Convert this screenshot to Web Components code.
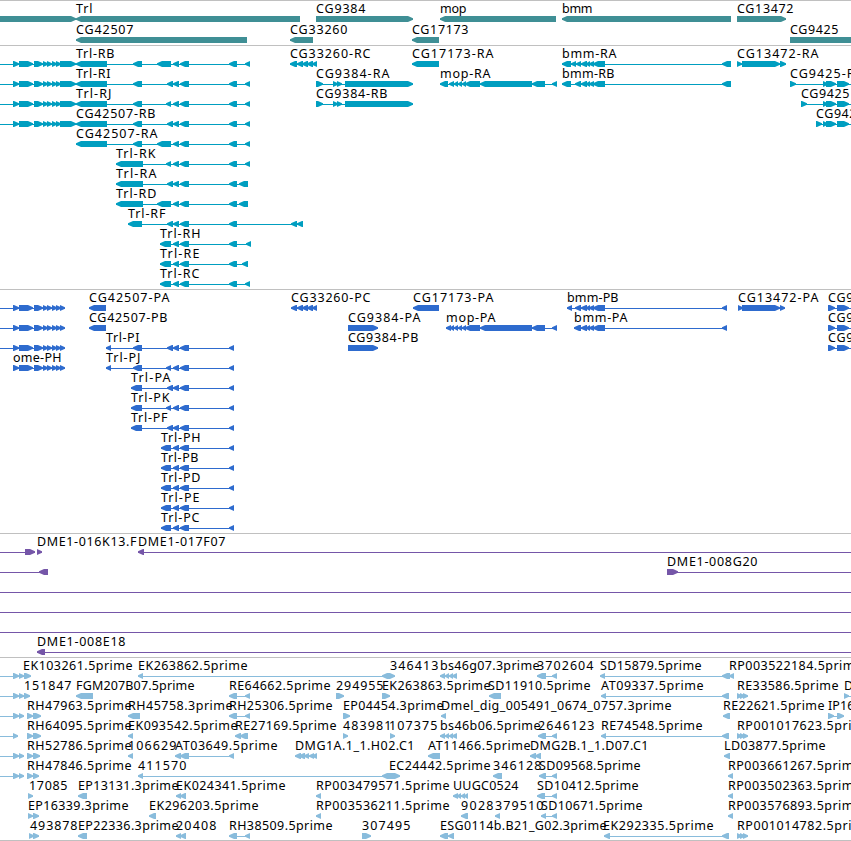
<!DOCTYPE html>
<html lang="en">
<head>
<meta charset="utf-8">
<title>Genome browser</title>
<style>
    body { margin: 0; background: #fff; overflow: hidden; font-family: "Noto Sans", "DejaVu Sans", sans-serif; font-size: 12.5px; color: #000; }
</style>
</head>
<body>
<genome-browser></genome-browser>
<script>
// Exon shapes: "<a-b" points left, ">a-b" points right, "=a-b" is a plain box, "~a-b" only extends the intron line.
const OME = '~0-13 >13-19 >19-33 >34-43 >43-48 >47-52 >52-57 >56-61 >60-76';
const OME_P = '>13-19 >19-33 >34-43 >43-48 >47-52 >52-57 >56-61 >60-65';
const E1 = '<167-173 <173-179 <180-189';
const E2 = '<166-171 <173-179 <180-189';
const E3 = '<157-171 <173-179 <180-189';
const E4 = '<173-179 <180-189';
const BMM = '<581-587 <586-590 <589-594 <593-605';
const MOP = '<454-458 <458-462 <462-466 <465-480 <480-532 <532-545 <552-557';
const TRI = '>737-742 >740-745 >743-748';

// Each feature is [label, label start, label end, exons].
const TRACKS = [
    { color: '#3f8f95', rowHeight: 21, pad: 2, rows: [
        [['', 0, 0, '>-9-76'], ['Trl', 76, 92, '<76-300'], ['CG9384', 316, 365, '>316-413'], ['mop', 440, 466, '<440-556'], ['bmm', 562, 592, '<562-731'], ['CG13472', 737, 793, '>737-786']],
        [['CG42507', 76, 133, '<76-247'], ['CG33260', 290, 347, '<290-313'], ['CG17173', 412, 468, '<412-439'], ['CG9425', 790, 838, '=790-860']]
    ] },
    { color: '#009ec0', rows: [
        [['', 0, 0, OME], ['Trl-RB', 76, 114, `<76-107 <133-142 ${E3} <229-237 <245-250`], ['CG33260-RC', 290, 370, '<290-297 <297-303 <302-308 <307-313 <312-317'], ['CG17173-RA', 412, 493, '<412-439'], ['bmm-RA', 562, 616, `<562-571 <571-576 <576-581 ${BMM} <722-731`], ['CG13472-RA', 737, 818, '>737-742 =742-774 >774-780 >780-786']],
        [['', 0, 0, OME], ['Trl-RI', 76, 110, `<76-107 <133-142 ${E1} <229-237 <245-250`], ['CG9384-RA', 316, 389, '>316-323 >333-338 >337-342 >345-413'], ['mop-RA', 440, 490, `<440-448 <449-454 ${MOP}`], ['bmm-RB', 562, 614, `<562-571 <575-581 ${BMM} <722-731`], ['CG9425-R', 790, 854, '>790-796 >823-828 >826-836 >837-849 ~849-851']],
        [['', 0, 0, OME], ['Trl-RJ', 76, 111, `<76-107 <133-142 ${E2} <229-237 <245-250`], ['CG9384-RB', 316, 387, '>316-323 >333-338 >337-342 >345-413'], ['CG9425', 801, 849, '>801-807 >823-828 >826-836 >837-849 ~849-851']],
        [['', 0, 0, OME], ['CG42507-RB', 76, 155, `<76-107 <133-142 ${E1} <229-237 <245-250`], ['CG942', 816, 856, '>816-822 >823-828 >826-836 >837-849 ~849-851']],
        [['CG42507-RA', 76, 157, `<76-107 <133-142 ${E3} <229-237 <245-250`]],
        [['Trl-RK', 116, 155, `<116-143 ${E2} <229-237 <245-250`]],
        [['Trl-RA', 116, 156, `<116-143 ${E1} <229-237 <239-248`]],
        [['Trl-RD', 116, 156, `<116-143 ${E3} <229-237 <239-248`]],
        [['Trl-RF', 128, 165, `<128-142 ${E1} <229-237 <291-297 <297-303`]],
        [['Trl-RH', 160, 200, `<160-171 ${E4} <229-237 <246-251`]],
        [['Trl-RE', 160, 199, `<160-171 ${E4} <229-237 <242-248`]],
        [['Trl-RC', 160, 199, `<160-171 ${E4} <229-237 <245-250`]]
    ] },
    { color: '#2e6bce', rows: [
        [['', 0, 0, `~0-13 ${OME_P}`], ['CG42507-PA', 89, 169, '<89-106'], ['CG33260-PC', 291, 370, '<291-297 <297-303 <302-308 <307-313 <312-317'], ['CG17173-PA', 413, 493, '<413-439'], ['bmm-PB', 567, 618, `<567-572 <575-581 ${BMM} <722-727`], ['CG13472-PA', 738, 818, '>738-743 =742-774 >774-780 >780-785'], ['CG9', 828, 853, '>828-835 >837-849 ~849-851']],
        [['', 0, 0, `~0-13 ${OME_P}`], ['CG42507-PB', 89, 167, '<89-106'], ['CG9384-PA', 348, 420, '>348-378'], ['mop-PA', 446, 495, `<446-451 <450-454 ${MOP}`], ['bmm-PA', 574, 627, `<574-581 ${BMM} <722-727`], ['CG9', 828, 853, '>828-835 >837-849 ~849-851']],
        [['', 0, 0, `~0-13 ${OME_P}`], ['Trl-PI', 106, 139, `<106-111 <133-142 ${E1} <229-234`], ['CG9384-PB', 348, 418, '>348-378'], ['CG9', 828, 853, '>828-835 >837-849 ~849-851']],
        [['ome-PH', 13, 61, OME_P], ['Trl-PJ', 106, 140, `<106-111 <133-142 ${E2} <229-234`]],
        [['Trl-PA', 131, 170, `<131-142 ${E1} <229-234`]],
        [['Trl-PK', 131, 169, `<131-142 ${E2} <229-234`]],
        [['Trl-PF', 131, 167, `<131-142 ${E1} <229-234`]],
        [['Trl-PH', 161, 200, `<161-171 ${E4} <229-234`]],
        [['Trl-PB', 161, 198, `<161-171 ${E4} <229-234`]],
        [['Trl-PD', 161, 200, `<161-171 ${E4} <229-234`]],
        [['Trl-PE', 161, 199, `<161-171 ${E4} <229-234`]],
        [['Trl-PC', 161, 199, `<161-171 ${E4} <229-234`]]
    ] },
    { color: '#7556a8', rows: [
        [['', 0, 0, '~0-25 >25-35'], ['DME1-016K13.F', 37, 136, '>37-42'], ['DME1-017F07', 138, 225, '<138-144 ~144-851']],
        [['', 0, 0, '~0-39 <39-48'], ['DME1-008G20', 667, 757, '>667-678 ~678-851']],
        [['', 0, 0, '~0-851']],
        [['', 0, 0, '~0-851']],
        [['', 0, 0, '~0-851']],
        [['DME1-008E18', 37, 125, '<37-45 ~45-851']]
    ] },
    { color: '#89bcdc', pad: 2, rows: [
        [['EK103261.5prime', 23, 132, '~0-13 >13-19 >19-24 >24-31'], ['EK263862.5prime', 138, 247, '<138-143 <382-388 >388-395'], ['346413', 390, 438, ''], ['bs46g07.3prime', 440, 539, '<440-445 <445-449 <449-453 <452-457'], ['3702604', 537, 593, '<537-546 <552-557'], ['SD15879.5prime', 600, 701, '<600-605 <722-730 <729-734'], ['RP003522184.5prim', 729, 854, '']],
        [['151847', 24, 71, '~0-13 >13-19 >19-24 >24-30'], ['FGM207B07.5prime', 76, 194, '<76-93'], ['RE64662.5prime', 229, 330, '<229-237 <245-250'], ['294955', 336, 383, '>336-344'], ['EK263863.5prime', 382, 490, '>382-390'], ['SD11910.5prime', 488, 590, '<489-501'], ['AT09337.5prime', 601, 703, '<601-606 <722-729'], ['RE33586.5prime', 737, 838, TRI], ['D', 844, 853, '>844-849 ~849-851']],
        [['', 0, 0, '~0-13 >13-19 >19-24'], ['RH47963.5prime', 27, 131, '>27-33 >33-41'], ['RH45758.3prime', 128, 232, '<128-140'], ['RH25306.5prime', 229, 332, '<229-237 <245-250'], ['EP04454.3prime', 343, 443, '>343-350'], ['Dmel_dig_005491_0674_0757.3prime', 441, 671, '<441-446'], ['RE22621.5prime', 723, 824, '<723-730'], ['IP16', 828, 854, '>828-834 >837-844']],
        [['', 0, 0, '~0-13 >13-18'], ['RH64095.5prime', 27, 131, '>27-33 >33-41'], ['EK093542.5prime', 128, 237, '<128-133'], ['RE27169.5prime', 235, 336, '<235-241 <240-248'], ['483981', 343, 391, '>343-348'], ['107375', 389, 437, '>390-395'], ['bs46b06.5prime', 440, 540, '<440-445 <445-449 <449-453 <452-457'], ['2646123', 538, 594, '<538-546 <552-557'], ['RE74548.5prime', 601, 702, '<601-606 <722-729'], ['RP001017623.5pri', 737, 851, TRI]],
        [['', 0, 0, '~0-13 >13-19 >19-24'], ['RH52786.5prime', 27, 131, '>27-33 >33-40'], ['106629', 128, 176, '<128-133'], ['AT03649.5prime', 175, 277, '<175-181 <180-189 <229-234'], ['DMG1A.1_1.H02.C1', 295, 414, '<295-301 <299-305 <304-309 <309-314 <312-317'], ['AT11466.5prime', 428, 530, '<428-440'], ['DMG2B.1_1.D07.C1', 530, 648, '<530-536 <535-541'], ['LD03877.5prime', 724, 825, '<724-730']],
        [['', 0, 0, '~0-13 >13-19 >19-24'], ['RH47846.5prime', 27, 131, '>27-33 >33-39'], ['411570', 138, 186, '<138-143 <382-390 >390-400'], ['EC24442.5prime', 389, 490, ''], ['346128', 493, 541, '<493-502'], ['SD09568.5prime', 539, 640, '<539-546 <552-557'], ['RP003661267.5prim', 728, 853, '<728-733']],
        [['17085', 29, 67, '>28-33'], ['EP13131.3prime', 78, 178, '<78-87'], ['EK024341.5prime', 176, 285, '<176-181 <180-186'], ['RP003479571.5prime', 316, 449, '<316-321'], ['UUGC0524', 453, 518, '<453-458 <457-461 <461-465 <464-468'], ['SD10412.5prime', 537, 638, '<537-545 <552-557'], ['RP003502363.5prim', 728, 853, '<728-733']],
        [['EP16339.3prime', 28, 128, '>28-33 >33-39'], ['EK296203.5prime', 149, 258, '<149-156'], ['RP003536211.5prime', 316, 449, '<316-321'], ['9028', 461, 493, '<461-468'], ['379510', 495, 543, '<495-500'], ['SD10671.5prime', 541, 642, '<541-546 <552-557'], ['RP003576893.5prim', 728, 853, '<728-733']],
        [['493878', 30, 77, '>29-34 >33-39'], ['EP22336.3prime', 78, 178, '<78-87'], ['20408', 176, 216, '<176-181 <180-186'], ['RH38509.5prime', 229, 332, '<229-237 <245-250'], ['307495', 362, 410, '>362-371'], ['ESG0114b.B21_G02.3prime', 440, 606, '<440-448 <448-454'], ['EK292335.5prime', 603, 713, '<604-610 <722-729'], ['RP001014782.5pri', 737, 851, TRI]]
    ] }
];

class TrackRow extends HTMLElement {
    constructor() {
        super();
        this.attachShadow({ mode: 'open' });
    }

    set features(list) {
        this.shadowRoot.innerHTML = `
            <style>
                :host { display: block; height: var(--row-height, 20px); }
                svg { display: block; width: 851px; height: 100%; overflow: visible; }
                .shapes { fill: var(--track-color); }
                text { fill: #000; }
            </style>
            <svg>
                <g class="shapes">${list.map(f => this.exons(f[3])).join('')}</g>
                ${list.map(f => this.label(f)).join('')}
            </svg>
        `;
    }

    exons(spec) {
        if (!spec) return '';
        const parts = spec.split(' ').map(s => {
            const m = s.match(/^(.)(-?\d+)-(\d+)$/);
            return { kind: m[1], a: +m[2], b: +m[3] };
        });
        const start = Math.min(...parts.map(p => p.a));
        const end = Math.max(...parts.map(p => p.b));
        let out = `<rect x="${start}" y="18" width="${end - start}" height="1"/>`;
        for (const { kind, a, b } of parts) {
            const head = Math.min(5, b - a);
            if (kind === '=') out += `<path d="M${a} 15H${b}V21H${a}Z"/>`;
            if (kind === '<') out += `<path d="M${a} 17.3V18.7L${a + head} 21H${b}V15H${a + head}Z"/>`;
            if (kind === '>') out += `<path d="M${b} 17.3V18.7L${b - head} 21H${a}V15H${b - head}Z"/>`;
        }
        return out;
    }

    label([text, start, end]) {
        if (!text) return '';
        // end includes the side bearing of the last letter
        const fit = end ? ` textLength="${end - start + 0.5}"` : '';
        return `<text x="${start}" y="12"${fit}>${text}</text>`;
    }
}

class GenomeTrack extends HTMLElement {
    constructor() {
        super();
        this.attachShadow({ mode: 'open' }).innerHTML = `
            <style>
                :host { display: flex; flex-direction: column; border-top: 1px solid #c0c0c0; padding-bottom: var(--track-pad, 3px); }
            </style>
            <slot></slot>
        `;
    }
}

class GenomeBrowser extends HTMLElement {
    constructor() {
        super();
        this.attachShadow({ mode: 'open' }).innerHTML = `
            <style>
                :host { display: flex; flex-direction: column; width: 851px; height: 840px; border-bottom: 1px solid #c0c0c0; }
            </style>
        `;
        for (const track of TRACKS) {
            const el = document.createElement('genome-track');
            el.style.setProperty('--track-color', track.color);
            el.style.setProperty('--row-height', `${track.rowHeight || 20}px`);
            el.style.setProperty('--track-pad', `${track.pad || 3}px`);
            for (const features of track.rows) {
                const row = document.createElement('track-row');
                row.features = features;
                el.append(row);
            }
            this.shadowRoot.append(el);
        }
    }
}

customElements.define('track-row', TrackRow);
customElements.define('genome-track', GenomeTrack);
customElements.define('genome-browser', GenomeBrowser);
</script>
</body>
</html>
